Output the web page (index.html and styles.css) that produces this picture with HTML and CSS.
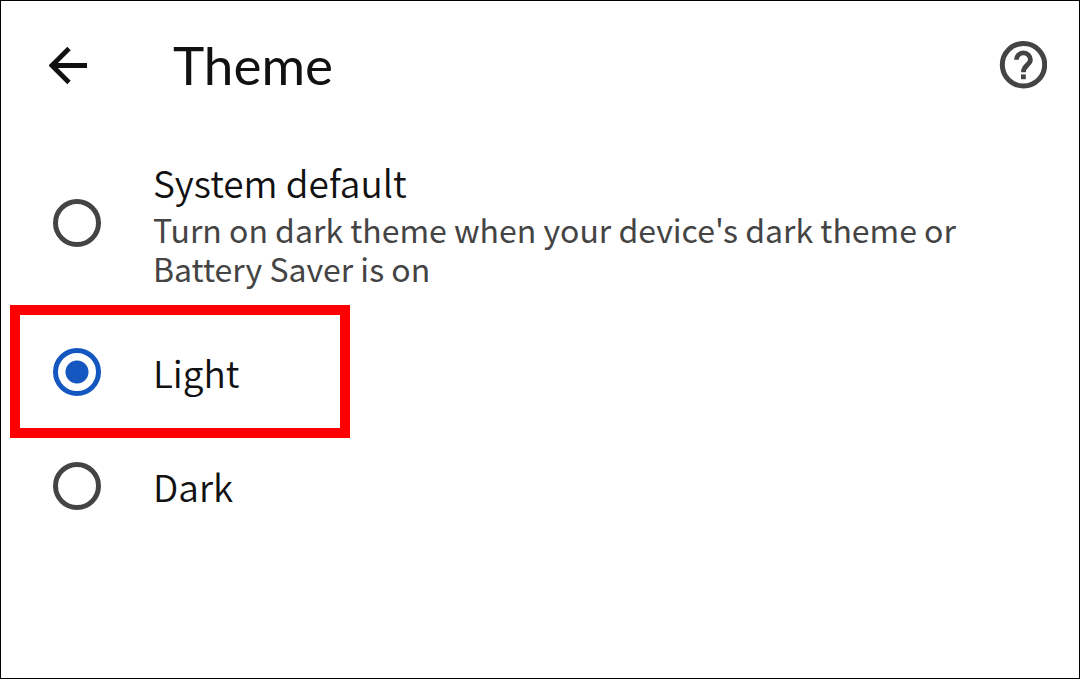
FILE: index.html
```html
<!DOCTYPE html>
<html lang="en">
<head>
<meta charset="utf-8">
<title>Theme</title>
<link rel="stylesheet" href="styles.css">
</head>
<body>
<header class="bar">
  <button class="icon-button" type="button" aria-label="Back">
    <svg class="back-icon" viewBox="0 0 40 40"><path d="M38 20.5H4M20 3.5L3 20.5l17 17" fill="none" stroke="currentColor" stroke-width="4.8"/></svg>
  </button>
  <h1 class="title">Theme</h1>
  <button class="icon-button" type="button" aria-label="Help">
    <svg class="help-icon" viewBox="0 0 48 48"><circle cx="24.5" cy="23.7" r="21.2" fill="none" stroke="currentColor" stroke-width="5"/><path d="M17.4 18.8a7 7 0 0 1 14 0c0 5-7 5.4-7 12.4" fill="none" stroke="currentColor" stroke-width="4.8"/><path d="M22 33.4h4.8v4.8h-4.8z" fill="currentColor"/></svg>
  </button>
</header>
<main class="options">
  <label class="option option-detailed">
    <input class="radio" type="radio" name="theme">
    <span class="text"><span class="name">System default</span><span class="detail">Turn on dark theme when your device's dark theme or Battery Saver is on</span></span>
  </label>
  <label class="option option-marked">
    <input class="radio" type="radio" name="theme" checked>
    <span class="name">Light</span>
  </label>
  <label class="option">
    <input class="radio" type="radio" name="theme">
    <span class="name">Dark</span>
  </label>
</main>
</body>
</html>
```
FILE: styles.css
```css
* { box-sizing: border-box; }
body {
  margin: 0;
  min-height: 100vh;
  border: 1px solid #000;
  background: #fff;
  color: #111;
  font-family: "Noto Sans CJK SC", "Noto Sans", sans-serif;
}
.bar {
  display: flex;
  align-items: center;
  padding: 32px 32px 32px 48px;
}
.icon-button {
  display: flex;
  padding: 0;
  border: 0;
  background: none;
  color: #111;
}
.back-icon { width: 40px; height: 40px; }
.help-icon { width: 48px; height: 48px; color: #444; }
.title {
  flex: 1;
  margin: 0 0 0 84px;
  font-family: Lato, sans-serif;
  font-size: 53px;
  line-height: 64px;
  font-weight: 400;
}
.options { padding: 29px 9px 0; }
.option {
  display: flex;
  align-items: center;
  gap: 52px;
  padding: 24px 32px 24px 43px;
}
.option-detailed { padding: 0 80px 17px 43px; }
.option-marked {
  width: 340px;
  padding: 33px 32px 32px 33px;
  border: 10px solid #f00;
}
.radio {
  flex: none;
  appearance: none;
  width: 48px;
  height: 48px;
  margin: 0;
  border: 5px solid #444;
  border-radius: 50%;
}
.radio:checked {
  border-color: #1557c0;
  background: radial-gradient(circle, #1557c0 11px, transparent 12px);
}
.text { display: flex; flex-direction: column; gap: 4px; }
.name { font-size: 37px; line-height: 48px; font-weight: 350; }
.detail { font-size: 32px; line-height: 39px; color: #444; }
```
